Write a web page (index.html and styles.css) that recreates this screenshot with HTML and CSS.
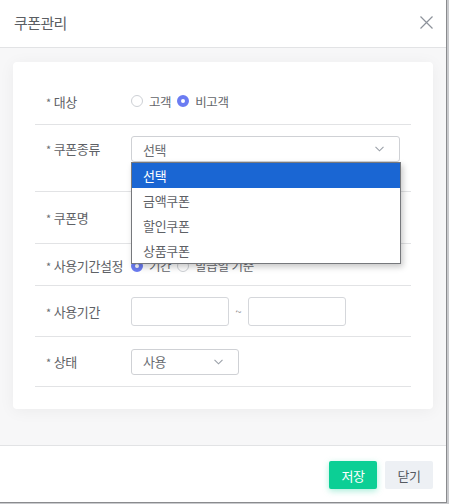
FILE: index.html
```html
<!DOCTYPE html>
<html lang="ko">
<head>
<meta charset="utf-8">
<title>쿠폰관리</title>
<link rel="stylesheet" href="styles.css">
</head>
<body>
<div class="modal">
  <header class="modal-head">
    <h1 class="modal-title">쿠폰관리</h1>
    <button class="close" type="button" aria-label="닫기">
      <svg width="13" height="13" viewBox="0 0 13 13"><path d="M0.5 0.5L12.5 12.5M12.5 0.5L0.5 12.5" stroke="#8d929b" stroke-width="1.2" fill="none"/></svg>
    </button>
  </header>

  <main class="modal-body">
    <section class="card">
      <div class="row row-target">
        <div class="label"><span class="req">*</span>대상</div>
        <div class="field radios">
          <label class="radio"><span class="dot"></span>고객</label>
          <label class="radio"><span class="dot on"></span>비고객</label>
        </div>
      </div>

      <div class="row row-type">
        <div class="label"><span class="req">*</span>쿠폰종류</div>
        <div class="field">
          <div class="select wide">
            <span>선택</span>
            <svg class="chev" width="9" height="6" viewBox="0 0 9 6"><path d="M0.5 0.8L4.5 4.8L8.5 0.8" stroke="#9aa0a8" stroke-width="1.1" fill="none"/></svg>
            <ul class="menu">
              <li class="active">선택</li>
              <li>금액쿠폰</li>
              <li>할인쿠폰</li>
              <li>상품쿠폰</li>
            </ul>
          </div>
        </div>
      </div>

      <div class="row row-name">
        <div class="label"><span class="req">*</span>쿠폰명</div>
        <div class="field"></div>
      </div>

      <div class="row row-mode">
        <div class="label"><span class="req">*</span>사용기간설정</div>
        <div class="field radios">
          <label class="radio"><span class="dot on"></span>기간</label>
          <label class="radio"><span class="dot"></span>발급일 기준</label>
        </div>
      </div>

      <div class="row row-period">
        <div class="label"><span class="req">*</span>사용기간</div>
        <div class="field period">
          <div class="input"></div>
          <span class="tilde">~</span>
          <div class="input"></div>
        </div>
      </div>

      <div class="row row-state">
        <div class="label"><span class="req">*</span>상태</div>
        <div class="field">
          <div class="select short">
            <span>사용</span>
            <svg class="chev" width="9" height="6" viewBox="0 0 9 6"><path d="M0.5 0.8L4.5 4.8L8.5 0.8" stroke="#9aa0a8" stroke-width="1.1" fill="none"/></svg>
          </div>
        </div>
      </div>
    </section>
  </main>

  <footer class="modal-foot">
    <button class="btn save" type="button">저장</button>
    <button class="btn cancel" type="button">닫기</button>
  </footer>
</div>
</body>
</html>
```

FILE: styles.css
```css
* { box-sizing: border-box; }

html, body {
  margin: 0;
  padding: 0;
  background: #c9cacd;
  font-family: "Noto Sans CJK KR", "Noto Sans", sans-serif;
  color: #555;
}

.modal {
  width: 447px;
  height: 503px;
  background: #fff;
  border-right: 1px solid #8a8b8e;
  border-bottom: 1px solid #8a8b8e;
  display: flex;
  flex-direction: column;
}

/* header */
.modal-head {
  height: 48px;
  flex: none;
  display: flex;
  align-items: center;
  justify-content: space-between;
  padding: 0 13px 2px 14px;
  border-bottom: 1px solid #e2e3e5;
}
.modal-title {
  margin: 0;
  font-size: 15px;
  font-weight: 400;
  color: #5b5e63;
  letter-spacing: -0.6px;
}
.close {
  border: 0;
  background: none;
  padding: 0;
  width: 13px;
  height: 13px;
  display: block;
}
.close svg { display: block; }

/* body */
.modal-body {
  flex: none;
  height: 398px;
  background: #f7f7f8;
  padding: 14px 13px 0 13px;
  border-bottom: 1px solid #e2e3e5;
}
.card {
  background: #fff;
  border-radius: 4px;
  height: 347px;
  padding: 13px 22px 0 22px;
  box-shadow: 0 2px 16px rgba(0, 0, 0, 0.05);
}

.row {
  display: flex;
  align-items: center;
  border-bottom: 1px solid #e2e3e5;
}
.row-target { height: 50px; padding-top: 3px; }
.row-type   { height: 67px; align-items: flex-start; padding-top: 11px; }
.row-name   { height: 52px; }
.row-mode   { height: 42px; padding-top: 2px; }
.row-period { height: 51px; }
.row-state  { height: 50px; }

.label {
  width: 96px;
  flex: none;
  padding-left: 11px;
  font-size: 13px;
  color: #5e6166;
  letter-spacing: -0.4px;
  white-space: nowrap;
}
.row-type .label { line-height: 26px; }
.req {
  font-size: 11px;
  margin-right: 3px;
  color: #6a6d72;
}

.field {
  flex: 1;
  display: flex;
  align-items: center;
}

/* radios */
.radios { gap: 6px; }
.radio {
  display: flex;
  align-items: center;
  gap: 6px;
  font-size: 12.5px;
  color: #63666b;
  letter-spacing: -0.4px;
}
.dot {
  width: 12px;
  height: 12px;
  border-radius: 50%;
  border: 1px solid #cdd0d5;
  background: #fff;
  flex: none;
}
.dot.on {
  border: 4px solid #6b7cf2;
}

/* selects */
.select {
  position: relative;
  height: 26px;
  border: 1px solid #cfd1d5;
  border-radius: 3px;
  background: #fff;
  display: flex;
  align-items: center;
  justify-content: space-between;
  padding: 0 15px 0 11px;
  font-size: 13px;
  color: #6a6d72;
  letter-spacing: -0.4px;
}
.select.wide { width: 269px; }
.select.short { width: 108px; }
.chev { display: block; }

.menu {
  position: absolute;
  left: -1px;
  top: 25px;
  width: 270px;
  margin: 0;
  padding: 0;
  list-style: none;
  background: #fff;
  border: 1px solid #76787c;
  box-shadow: 2px 3px 6px rgba(0, 0, 0, 0.22);
  z-index: 5;
}
.menu li {
  height: 25px;
  line-height: 25px;
  padding-left: 11px;
  font-size: 13px;
  color: #5e6166;
  letter-spacing: -0.3px;
}
.menu li.active {
  background: #1a66d3;
  color: #fff;
}

/* period */
.period { gap: 0; }
.input {
  width: 98px;
  height: 29px;
  border: 1px solid #d5d7db;
  border-radius: 3px;
  background: #fff;
}
.tilde {
  width: 19px;
  text-align: center;
  font-size: 11px;
  color: #888;
}

/* footer */
.modal-foot {
  flex: 1;
  display: flex;
  justify-content: flex-end;
  align-items: flex-start;
  gap: 8px;
  padding: 15px 13px 0 0;
}
.btn {
  width: 48px;
  height: 28px;
  border: 0;
  border-radius: 2px;
  font-family: inherit;
  font-size: 13px;
  letter-spacing: -0.4px;
  padding: 0;
}
.save {
  background: #0ccf95;
  color: #fff;
  box-shadow: 0 2px 6px rgba(12, 207, 149, 0.35);
}
.cancel {
  background: #edf0f4;
  color: #555a61;
}
```
